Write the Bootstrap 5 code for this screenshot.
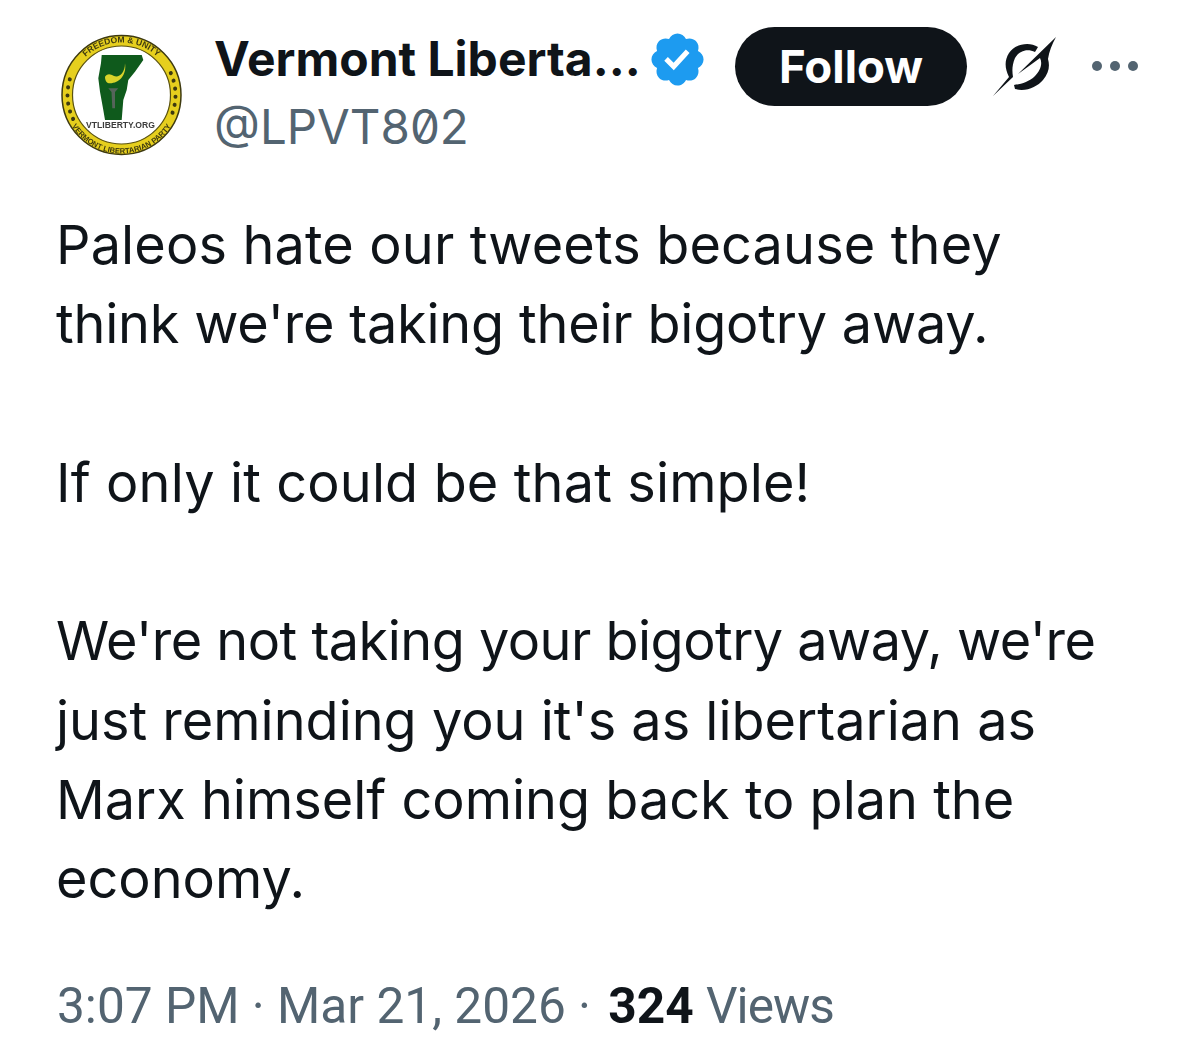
<!DOCTYPE html>
<html lang="en">
<head>
<meta charset="utf-8">
<title>Tweet</title>
<link href="https://cdn.jsdelivr.net/npm/bootstrap@5.3.0/dist/css/bootstrap.min.css" rel="stylesheet">
<style>
html,body{background:#fff;margin:0;height:1045px;overflow:hidden}
body{font-family:Inter,"Noto Sans","Liberation Sans",sans-serif;color:#0f1419}
.tw-wrap{padding:26px 0 0 57px;width:1200px}
.tw-head{height:130px}
.tw-avatar{width:126px;height:130px;flex:none;margin-top:1px;filter:blur(.5px)}
.tw-names{margin-left:32px;width:520px;flex:none;margin-top:1px}
.tw-name{font-size:48px;font-weight:700;line-height:58px;white-space:nowrap;margin-left:-1px}
.tw-handle{font-size:47.5px;line-height:58px;color:#536471;margin-top:8px;margin-left:-1px;font-feature-settings:"zero"}
.tw-badge{width:61px;height:61px;margin-left:6px;margin-top:2px;flex:none}
.tw-follow{width:232px;height:79px;background:#0f1419;color:#fff;font-size:45.6px;font-weight:700;border-radius:40px;border:0;padding:0;line-height:79px;flex:none;margin-top:1px}
.tw-slash{width:80px;height:80px;margin-left:18px;flex:none;margin-top:-1px}
.tw-more{width:52px;height:14px;margin-left:25px;flex:none;margin-top:33px}
.tw-body{margin-top:49px;margin-left:-1px;font-size:54px;line-height:79.3px;width:1120px;white-space:nowrap}
.tw-body p{margin:0}
.tw-gap{height:79.3px}
.tw-l1{letter-spacing:.15px}
.tw-l2{letter-spacing:-.2px}
.tw-l3{letter-spacing:.14px}
.tw-l5{letter-spacing:-.52px}
.tw-meta{margin-top:57px;font-family:Roboto,"Liberation Sans",sans-serif;font-size:49.6px;line-height:60px;color:#536471;white-space:nowrap}
.tw-meta strong{color:#0f1419;font-weight:700;margin-left:5px}
.tw-views{letter-spacing:-1px}
</style>
</head>
<body>
<div class="tw-wrap">
  <div class="d-flex align-items-start tw-head">
    <svg class="tw-avatar" viewBox="0 0 126 130">
      <circle cx="64.5" cy="68" r="59.5" fill="#e6cf1e" stroke="#3e3a10" stroke-width="1.5"/>
      <circle cx="64.5" cy="68" r="49" fill="#fff" stroke="#5a5210" stroke-width="1.2"/>
      <path d="M16.1 92A54 54 0 0 1 15.2 46M113.8 46A54 54 0 0 1 112.9 92" fill="none" stroke="#3e3a10" stroke-width="4" stroke-linecap="round" stroke-dasharray="0.1 8"/>
      <path d="M44.7 28L84.7 28L86.3 33L78 44.7L71.3 53L69.7 63L66.3 73L64.7 93L48 93L46.3 83L43 64.7L41.3 51.3L44 36Z" fill="#0f5a1c"/>
      <path d="M68 36.3C68 46 62 51 57 49C53 47 51 46 48 49.7C48 54 50 56.3 53 56.3C62 56.3 70 48 68 36.3Z" fill="#d9d32a"/>
      <path d="M51.3 61.3L61.3 61.3L58 65L58 81.3L55.3 81.3L54.5 65Z" fill="#55645a"/>
      <defs>
        <path id="arcTop" d="M12 68A52.5 52.5 0 0 1 117 68"/>
        <path id="arcBottom" d="M6 68A58.5 58.5 0 0 0 123 68"/>
      </defs>
      <text font-family="Liberation Sans,sans-serif" font-size="8.5" font-weight="700" fill="#3e3a10"><textPath href="#arcTop" startOffset="50%" text-anchor="middle">FREEDOM &amp; UNITY</textPath></text>
      <text font-family="Liberation Sans,sans-serif" font-size="7.6" font-weight="700" fill="#3e3a10"><textPath href="#arcBottom" startOffset="50%" text-anchor="middle">VERMONT LIBERTARIAN PARTY</textPath></text>
      <text x="63.5" y="101" text-anchor="middle" font-family="Liberation Sans,sans-serif" font-size="8.6" font-weight="700" fill="#3c3c3c">VTLIBERTY.ORG</text>
    </svg>
    <div class="tw-names">
      <div class="d-flex align-items-center">
        <span class="tw-name">Vermont Liberta...</span>
        <svg class="tw-badge" viewBox="0 0 24 24"><path fill="#1d9bf0" d="M22.25 12c0-1.43-.88-2.67-2.19-3.34.46-1.39.2-2.9-.81-3.91s-2.52-1.27-3.91-.81c-.66-1.31-1.91-2.19-3.34-2.19s-2.67.88-3.33 2.19c-1.4-.46-2.91-.2-3.92.81s-1.26 2.52-.8 3.91c-1.31.67-2.2 1.91-2.2 3.34s.89 2.67 2.2 3.34c-.46 1.39-.21 2.9.8 3.91s2.52 1.26 3.91.81c.67 1.31 1.91 2.19 3.34 2.19s2.68-.88 3.34-2.19c1.39.45 2.9.2 3.91-.81s1.27-2.52.81-3.91c1.31-.67 2.19-1.91 2.19-3.34z"/><path fill="#fff" d="M10.54 16.2L6.8 12.46l1.41-1.42 2.26 2.26 4.8-5.23 1.47 1.36z"/></svg>
      </div>
      <div class="tw-handle">@LPVT802</div>
    </div>
    <button class="tw-follow" type="button">Follow</button>
    <svg class="tw-slash" viewBox="0 0 80 80">
      <path d="M8 71L24 52C20 44 19 36 24 28C30 19 44 16 53 22L50 27C42 23 34 26 30 33C27 40 27 46 28 52Z" fill="#0f1419"/>
      <path d="M71 12L33 49L55 33C58 39 55 46 50 51C44 57 36 59 29 60L30 64C41 67 52 62 58 55C64 48 65 41 63 34C64 27 67 19 71 12Z" fill="#0f1419"/>
    </svg>
    <svg class="tw-more" viewBox="0 0 52 14"><circle cx="7" cy="7" r="5" fill="#536471"/><circle cx="25" cy="7" r="5" fill="#536471"/><circle cx="43" cy="7" r="5" fill="#536471"/></svg>
  </div>
  <div class="tw-body">
    <p><span class="tw-l1">Paleos hate our tweets because they</span><br><span class="tw-l2">think we're taking their bigotry away.</span></p>
    <div class="tw-gap"></div>
    <p class="tw-l3">If only it could be that simple!</p>
    <div class="tw-gap"></div>
    <p><span class="tw-l5">We're not taking your bigotry away, we're</span><br>just reminding you it's as libertarian as<br>Marx himself coming back to plan the<br>economy.</p>
  </div>
  <div class="tw-meta">3:07 PM · Mar 21, 2026 · <strong>324</strong> <span class="tw-views">Views</span></div>
</div>
<script src="https://cdn.jsdelivr.net/npm/bootstrap@5.3.0/dist/js/bootstrap.bundle.min.js"></script>
</body>
</html>
